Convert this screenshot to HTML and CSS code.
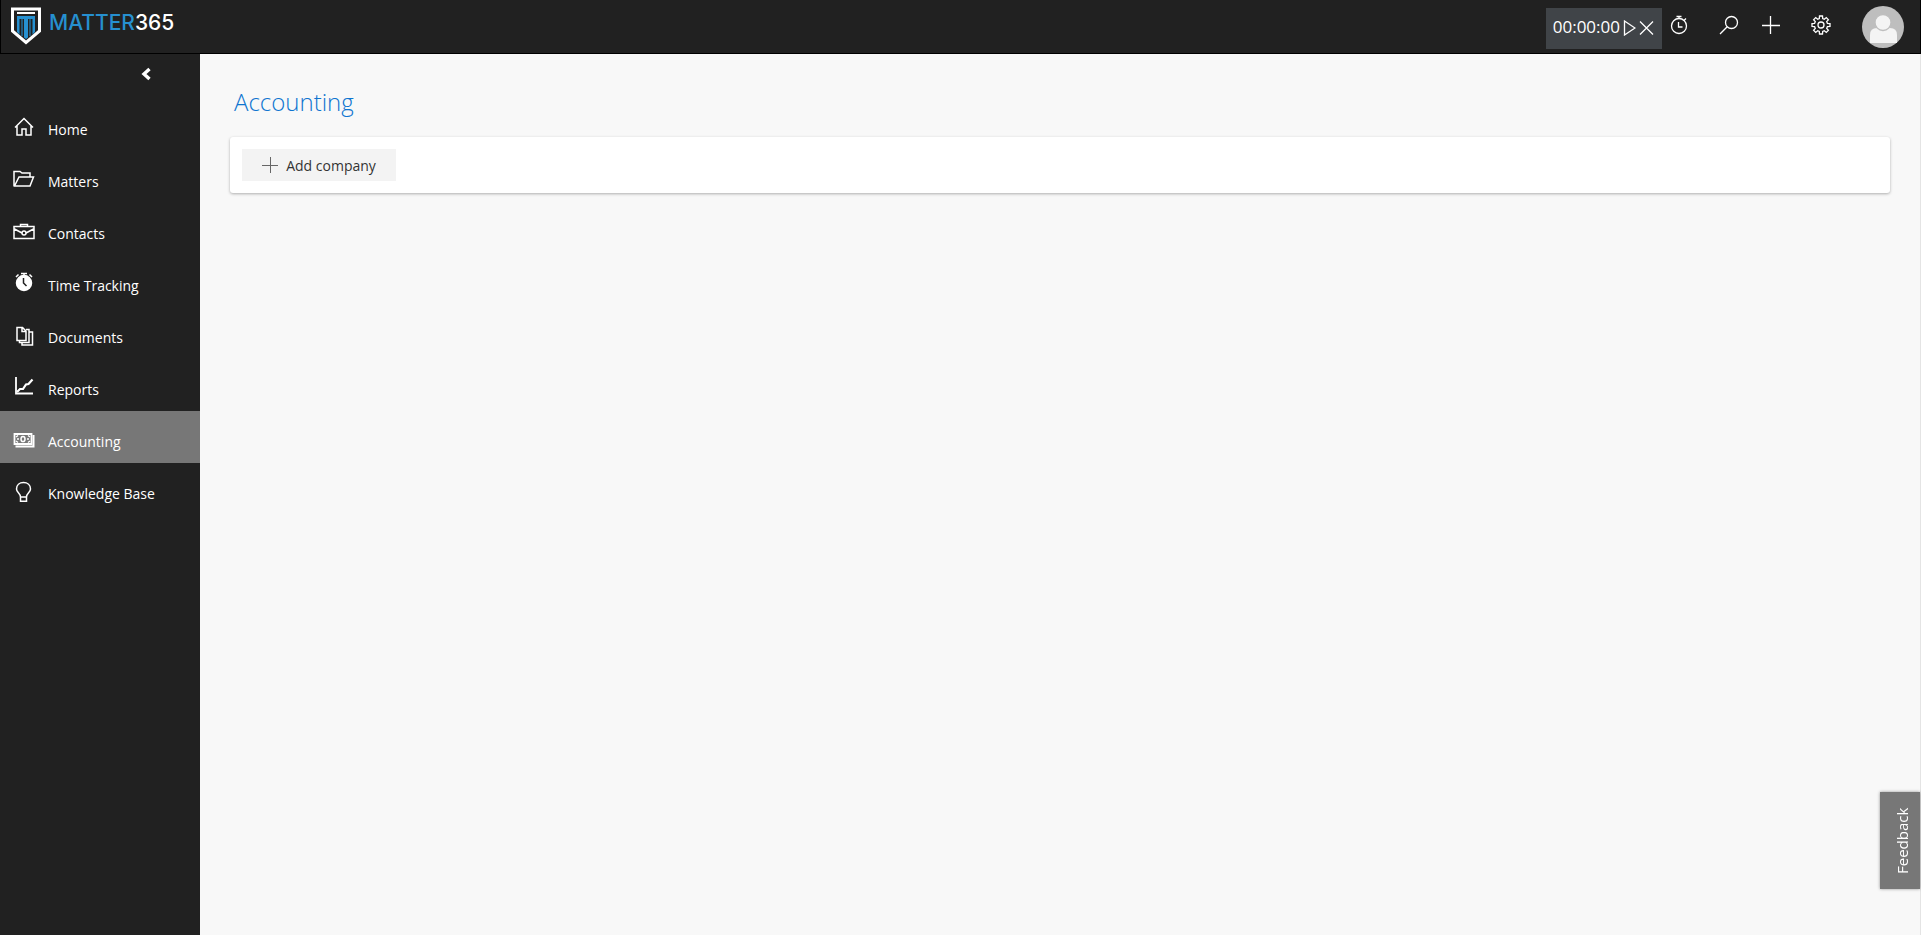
FILE: index.html
```html
<!DOCTYPE html>
<html lang="en">
<head>
  <meta charset="UTF-8">
  <meta name="viewport" content="width=device-width, initial-scale=1.0">
  <title>Accounting - Matter365</title>
  <link rel="stylesheet" href="styles.css">
</head>
<body>

  <header class="header">
    <a href="#" class="logo">
      <svg class="logo-mark" width="32" height="38" viewBox="0 0 32 38" fill="none">
        <path d="M2.5 2H29.5V24L16 35.5L2.5 24Z" stroke="#fff" stroke-width="3"/>
        <path d="M7 6H25" stroke="#fff" stroke-width="2"/>
        <path d="M7 9H25V25L22.500 27.500V12H18V30.500L16 32L14 30.500V12H9.500V27.500L7 25Z" fill="#2690d0"/>
        <path d="M12 12V29M20 12V29" stroke="#2690d0" stroke-width="1"/>
      </svg>
      <span class="logo-text">MATTER<span class="logo-number">365</span></span>
    </a>

    <div class="header-actions">
      <div class="timer">
        <span>00:00:00</span>
        <button class="timer-button" aria-label="Start timer">
          <svg width="13" height="16" viewBox="0 0 13 16"><path d="M1.500 1L12 8L1.500 15Z"/></svg>
        </button>
        <button class="timer-button" aria-label="Clear timer">
          <svg width="15" height="16" viewBox="0 0 15 16"><path d="M1 1.5L14 14.5M14 1.5L1 14.5"/></svg>
        </button>
      </div>
      <button class="header-button" aria-label="Timers">
        <svg width="20" height="20" viewBox="0 0 20 20">
          <circle cx="10" cy="11" r="7.500"/>
          <path d="M7.5 1.5H12.5M10 1.5V4M15 5.500L17 3.500M9.5 7V12H13.5"/>
        </svg>
      </button>
      <button class="header-button search-button" aria-label="Search">
        <svg width="20" height="20" viewBox="0 0 20 20">
          <circle cx="12.5" cy="7.5" r="6"/>
          <path d="M8.2 11.8L1 19"/>
        </svg>
      </button>
      <button class="header-button add-button" aria-label="Add">
        <svg width="20" height="20" viewBox="0 0 20 20"><path d="M1 10.5H19M9.5 1V19"/></svg>
      </button>
      <button class="header-button settings-button" aria-label="Settings">
        <svg width="20" height="20" viewBox="0 0 20 20">
          <path d="M8.3 3.6L8.5 1H11.5L11.7 3.6L13.3 4.3L15.3 2.6L17.4 4.7L15.7 6.7L16.4 8.3L19 8.5V11.5L16.4 11.7L15.7 13.3L17.4 15.3L15.3 17.4L13.3 15.7L11.7 16.4L11.5 19H8.5L8.3 16.4L6.7 15.7L4.7 17.4L2.6 15.3L4.3 13.3L3.6 11.7L1 11.5V8.5L3.6 8.3L4.3 6.7L2.6 4.7L4.7 2.6L6.7 4.3Z"/>
          <circle cx="10" cy="10" r="3"/>
        </svg>
      </button>
      <button class="avatar" aria-label="Profile">
        <svg width="42" height="42" viewBox="0 0 42 42">
          <circle cx="21" cy="21" r="21" fill="#bebebe"/>
          <path d="M8 37V29Q8 22 15 22H28Q35 22 35 29V37Z" fill="#f4f4f4"/>
          <circle cx="21" cy="16.5" r="8" fill="#f4f4f4" stroke="#bebebe"/>
        </svg>
      </button>
    </div>
  </header>

  <div class="layout">
    <nav class="sidebar">
      <button class="collapse" aria-label="Collapse menu">
        <svg width="11" height="14" viewBox="0 0 11 14"><path d="M8.5 2L3 7L8.5 12" fill="none" stroke="#fff" stroke-width="3.4"/></svg>
      </button>
      <ul class="menu">
        <li><a href="#" class="menu-item">
          <svg class="icon" width="22" height="22" viewBox="0 0 22 22"><path d="M2 11.500L11 2.500L20 11.500M4 10V19H9V13H13V19H18V10"/></svg>
          Home
        </a></li>
        <li><a href="#" class="menu-item">
          <svg class="icon" width="22" height="22" viewBox="0 0 22 22"><path d="M1 18V3.500H7L9 5H17V9M1.500 18L6 9H20.500L17 18Z"/></svg>
          Matters
        </a></li>
        <li><a href="#" class="menu-item">
          <svg class="icon" width="22" height="22" viewBox="0 0 22 22"><path d="M1 6.500H21V18.500H1ZM7.500 6.500V4.500H14.500V6.500M1.500 9L9 13M20.500 9L13 13"/><circle cx="11" cy="13" r="2"/></svg>
          Contacts
        </a></li>
        <li><a href="#" class="menu-item">
          <svg class="icon" width="22" height="22" viewBox="0 0 22 22"><circle cx="11" cy="11" r="7.500" fill="#fff"/><path d="M8 1.500H14M11 1.500V4M3 5L5.500 2.500M19 5L16.500 2.500"/><path d="M10.500 6V11L13.500 14" stroke="#212121"/></svg>
          Time Tracking
        </a></li>
        <li><a href="#" class="menu-item">
          <svg class="icon" width="22" height="22" viewBox="0 0 22 22"><path d="M4 3.500H9.500L13 7V16.500H4ZM9 3.500V7.500H13"/><path d="M13 5.500H16V18.500H6.500V16.500M16 8H19.500V21H9V18.500"/></svg>
          Documents
        </a></li>
        <li><a href="#" class="menu-item">
          <svg class="icon" width="22" height="22" viewBox="0 0 22 22"><path d="M3 1V17.500H20" stroke-width="1.800"/><path d="M4 16L7 13H10L13 8.500L15.500 8L19.500 3.500" stroke-width="2.200"/></svg>
          Reports
        </a></li>
        <li><a href="#" class="menu-item active" aria-current="page">
          <svg class="icon" width="22" height="22" viewBox="0 0 22 22"><path d="M1.500 6H18.500V16H1.500Z" stroke-width="1.800"/><path d="M2.500 18.500H20.500V7" stroke-width="2"/><ellipse cx="10" cy="11" rx="2" ry="2.600"/><path d="M3 9L5 7.500M3 13L5 14.500M17 9L15 7.500M17 13L15 14.500M4 11H6M14 11H16"/></svg>
          Accounting
        </a></li>
        <li><a href="#" class="menu-item">
          <svg class="icon" width="22" height="22" viewBox="0 0 22 22"><path d="M7.500 17C7.500 13 3.500 12.500 3.500 9C3.500 5 6.500 2.500 10.500 2.500S17.500 5 17.500 9C17.500 12.500 13.500 13 13.500 17ZM7.500 17V21.300H13.500V17"/></svg>
          Knowledge Base
        </a></li>
      </ul>
    </nav>

    <main class="content">
      <h1 class="page-title">Accounting</h1>
      <div class="card">
        <button class="add-company">
          <svg width="16" height="16" viewBox="0 0 16 16"><path d="M0 8.500H16M8.500 0V16" fill="none" stroke="#666"/></svg>
          Add company
        </button>
      </div>
    </main>
  </div>

  <button class="feedback">Feedback</button>

</body>
</html>
```
FILE: styles.css
```css
* {
  box-sizing: border-box;
}

body {
  margin: 0;
  min-height: 100vh;
  display: flex;
  flex-direction: column;
  font-family: "Open Sans", "Noto Sans", sans-serif;
  font-size: 14px;
  color: #333;
  background-color: #f8f8f8;
}

button {
  padding: 0;
  border: none;
  background: none;
  font-family: inherit;
  cursor: pointer;
}

svg {
  display: block;
  flex-shrink: 0;
}

.header {
  display: flex;
  justify-content: space-between;
  height: 54px;
  padding-left: 9px;
  padding-right: 16px;
  background-color: #212121;
  border: 1px solid #000;
  border-top: none;
}

.logo {
  display: flex;
  align-items: flex-start;
  gap: 7px;
  padding-top: 7px;
  text-decoration: none;
}

.logo-text {
  padding-top: 4px;
  font-family: Inter, sans-serif;
  font-size: 21px;
  line-height: 24px;
  font-weight: 500;
  color: #2690d0;
}

.logo-number {
  color: #fff;
}

.header-actions {
  display: flex;
  align-items: flex-start;
}

.header-actions svg {
  fill: none;
  stroke: #fff;
  stroke-width: 1.3;
}

.timer {
  display: flex;
  align-items: center;
  gap: 3px;
  height: 41px;
  margin-top: 8px;
  padding: 0 8px 4px 7px;
  font-size: 17px;
  color: #fff;
  background-color: #404448;
}

.timer-button {
  padding-top: 2px;
}

.header-button {
  margin-top: 15px;
  margin-left: 7px;
}

.search-button {
  margin-left: 30px;
}

.add-button {
  margin-left: 22px;
}

.settings-button {
  margin-left: 30px;
}

.avatar {
  margin-top: 6px;
  margin-left: 31px;
}

.avatar svg {
  stroke: none;
}

.layout {
  flex: 1;
  display: flex;
}

.sidebar {
  width: 200px;
  flex-shrink: 0;
  background-color: #212121;
}

.collapse {
  display: block;
  margin: 13px 48px 18px auto;
}

.menu {
  margin: 0;
  padding: 0;
  list-style: none;
}

.menu-item {
  display: flex;
  align-items: center;
  gap: 13px;
  height: 52px;
  padding-top: 8px;
  padding-left: 13px;
  color: #fff;
  text-decoration: none;
}

.menu-item.active {
  background-color: #777;
}

.icon {
  margin-bottom: 4px;
  fill: none;
  stroke: #fff;
  stroke-width: 1.5;
}

.content {
  flex: 1;
  padding: 32px 30px;
  border-right: 1px solid #e4e4e4;
}

.page-title {
  margin: 0 0 19px 4px;
  font-size: 24px;
  line-height: 32px;
  font-weight: 300;
  color: #0f75d0;
}

.card {
  padding: 12px;
  background-color: #fff;
  border-radius: 3px;
  box-shadow: 0 1px 3px rgba(0, 0, 0, 0.3);
}

.add-company {
  display: flex;
  align-items: center;
  justify-content: center;
  gap: 8px;
  width: 154px;
  height: 32px;
  font-size: 14px;
  font-weight: 500;
  color: #333;
  background-color: #f3f3f3;
}

.feedback {
  position: fixed;
  right: 1px;
  bottom: 46px;
  width: 40px;
  height: 97px;
  padding-right: 4px;
  writing-mode: vertical-rl;
  transform: rotate(180deg);
  font-size: 15px;
  color: #fff;
  background-color: #777;
  box-shadow: 0 0 3px rgba(0, 0, 0, 0.4);
}
```
